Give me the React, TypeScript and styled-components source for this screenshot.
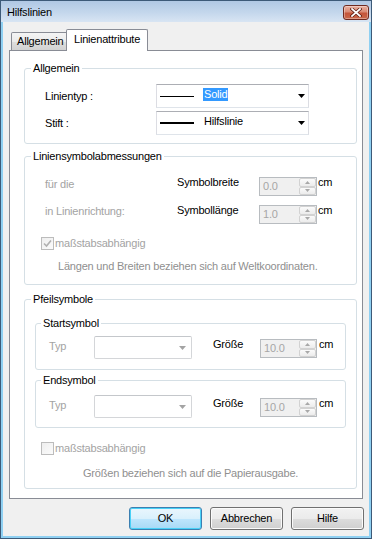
import React from "react";
import styled, { createGlobalStyle, css } from "styled-components";

const Global = createGlobalStyle`
  html, body { margin: 0; padding: 0; background: #ffffff; }
  body {
    font-family: "Liberation Sans", Arial, sans-serif;
    font-size: 11px;
    letter-spacing: -0.2px;
    color: #000;
  }
  * { box-sizing: border-box; }
`;

const Window = styled.div`
  width: 372px;
  height: 539px;
  display: flex;
  flex-direction: column;
  border: 1px solid #3d5a78;
  background: #8fd0f2;
`;

const TitleBar = styled.div`
  height: 21px;
  flex: none;
  display: flex;
  align-items: center;
  justify-content: space-between;
  padding: 0 2px 0 6px;
  background: linear-gradient(#b0c8e4, #c4d7ec 55%, #d8e5f3);
  line-height: 13px;
`;

const TitleText = styled.span`
  padding-top: 1px;
`;

const CloseButton = styled.div`
  width: 26px;
  height: 15px;
  margin-top: 2px;
  border: 1px solid #6f2a20;
  border-radius: 3px;
  background: linear-gradient(#eab1a2 0%, #d98a74 45%, #c5553a 55%, #c9684b 100%);
  box-shadow: inset 0 0 0 1px rgba(255, 255, 255, 0.35);
  display: flex;
  align-items: center;
  justify-content: center;
`;

const Body = styled.div`
  flex: 1;
  margin: 0 2px 2px;
  background: #f0f0f0;
  display: flex;
  flex-direction: column;
  padding: 7px 5px 0 6px;
`;

const TabStrip = styled.div`
  display: flex;
  align-items: flex-start;
  height: 22px;
  padding-left: 2px;
  margin-bottom: -1px;
  position: relative;
  z-index: 1;
`;

const Tab = styled.div<{ $active?: boolean; $w: number }>`
  width: ${(p) => p.$w}px;
  border: 1px solid #898c95;
  border-bottom: none;
  border-radius: 2px 2px 0 0;
  line-height: 13px;
  white-space: nowrap;
  overflow: hidden;
  ${(p) =>
    p.$active
      ? css`
          height: 22px;
          margin-left: -2px;
          padding: 3px 0 0 7px;
          background: #ffffff;
        `
      : css`
          height: 18px;
          margin-top: 3px;
          padding: 2px 0 0 5px;
          background: linear-gradient(#f4f4f4 0%, #ebebeb 50%, #dedede 51%, #d2d2d2 100%);
        `}
`;

const Panel = styled.div`
  width: 354px;
  height: 449px;
  border: 1px solid #898c95;
  background: #ffffff;
  display: flex;
  flex-direction: column;
  padding: 17px 5px 0 14px;
`;

const Group = styled.div<{ $h: number; $mt?: number; $mx?: number; $pt?: number }>`
  position: relative;
  flex: none;
  height: ${(p) => p.$h}px;
  margin: ${(p) => p.$mt ?? 0}px ${(p) => p.$mx ?? 0}px 0;
  padding-top: ${(p) => p.$pt ?? 0}px;
  border: 1px solid #d5dfe5;
  border-radius: 3px;
  display: flex;
  flex-direction: column;
`;

const GroupTitle = styled.span<{ $left?: number }>`
  position: absolute;
  top: -7px;
  left: ${(p) => p.$left ?? 6}px;
  padding: 0 2px;
  background: #ffffff;
  line-height: 13px;
  white-space: nowrap;
`;

const LineGrid = styled.div`
  display: grid;
  grid-template-columns: 111px 153px;
  row-gap: 3px;
  align-items: center;
  padding: 15px 0 0 20px;
`;

const Label = styled.span<{ $dim?: boolean; $dy?: number }>`
  line-height: 13px;
  white-space: nowrap;
  color: ${(p) => (p.$dim ? "#a3a3a3" : "#000000")};
  margin-top: ${(p) => p.$dy ?? 0}px;
`;

const Combo = styled.div<{ $w: number; $h: number; $disabled?: boolean }>`
  width: ${(p) => p.$w}px;
  height: ${(p) => p.$h}px;
  display: flex;
  align-items: center;
  background: #ffffff;
  border: 1px solid ${(p) => (p.$disabled ? "#c4c7cb" : "#acaeb4")};
  border-left-color: ${(p) => (p.$disabled ? "#d4d6d9" : "#dcdde3")};
  border-right-color: ${(p) => (p.$disabled ? "#d4d6d9" : "#dcdde3")};
  border-bottom-color: ${(p) => (p.$disabled ? "#d4d6d9" : "#dfe4ea")};
  border-radius: ${(p) => (p.$disabled ? 2 : 0)}px;
  padding-right: ${(p) => (p.$disabled ? 5 : 3)}px;
`;

const LineSample = styled.span<{ $weight: number }>`
  width: 34px;
  height: ${(p) => p.$weight}px;
  margin-left: 3px;
  background: #000;
  flex: none;
`;

const ComboText = styled.span<{ $selected?: boolean }>`
  margin-left: 9px;
  margin-bottom: 3px;
  padding: 0 1px;
  line-height: 13px;
  ${(p) =>
    p.$selected &&
    css`
      background: #3399ff;
      color: #ffffff;
    `}
`;

const Arrow = styled.svg`
  margin-left: auto;
  flex: none;
`;

const DimGrid = styled.div`
  display: grid;
  grid-template-columns: 132px 82px 58px auto;
  grid-auto-rows: 19px;
  row-gap: 9px;
  align-items: start;
  padding: 20px 0 0 20px;
`;

const SubGrid = styled.div`
  display: grid;
  grid-template-columns: 45px 98px 21px 47px 57px auto;
  align-items: start;
  padding-left: 13px;
`;

const Spacer = styled.span``;

const SpinBox = styled.div<{ $w: number; $dy?: number }>`
  width: ${(p) => p.$w}px;
  height: 19px;
  margin-top: ${(p) => p.$dy ?? 0}px;
  display: flex;
  border: 1px solid #b8bcc0;
  background: #f0f0f0;
`;

const SpinValue = styled.span`
  flex: 1;
  padding-left: 3px;
  line-height: 17px;
  color: #a6a6a6;
`;

const SpinButtons = styled.div`
  width: 17px;
  display: flex;
  flex-direction: column;
  background: #f0f0f0;
`;

const SpinStep = styled.div`
  flex: 1;
  border: 1px solid #d2d2d2;
  border-radius: 2px;
  background: linear-gradient(#fbfbfb, #ececec);
  display: flex;
  align-items: center;
  justify-content: center;
`;

const Unit = styled.span<{ $gap: number; $dy?: number }>`
  margin-left: ${(p) => p.$gap}px;
  margin-top: ${(p) => p.$dy ?? -1}px;
  line-height: 13px;
`;

const CheckRow = styled.div<{ $mt: number }>`
  display: flex;
  align-items: flex-start;
  gap: 1px;
  margin: ${(p) => p.$mt}px 0 0 16px;
  color: #a3a3a3;
  line-height: 13px;
`;

const CheckBox = styled.span`
  width: 13px;
  height: 13px;
  flex: none;
  border: 1px solid #bcbcbc;
  background: linear-gradient(135deg, #eeeeee, #fbfbfb);
  display: flex;
  align-items: center;
  justify-content: center;
`;

const Note = styled.div<{ $mt: number; $pl: number }>`
  margin-top: ${(p) => p.$mt}px;
  padding-left: ${(p) => p.$pl}px;
  color: #8f8f8f;
  line-height: 13px;
  white-space: nowrap;
`;

const ButtonRow = styled.div`
  display: flex;
  justify-content: flex-end;
  gap: 8px;
  margin-top: 8px;
`;

const Button = styled.div<{ $default?: boolean }>`
  width: 73px;
  height: 23px;
  border: 1px solid #707070;
  border-radius: 3px;
  display: flex;
  align-items: center;
  justify-content: center;
  line-height: 13px;
  background: linear-gradient(#f2f2f2 0%, #ebebeb 50%, #dddddd 51%, #cfcfcf 100%);
  box-shadow: inset 0 0 0 1px #fbfbfb;
  ${(p) =>
    p.$default &&
    css`
      border-color: #3c7fb1;
      background: linear-gradient(#eaf6fd 0%, #d9f0fc 50%, #bee6fd 51%, #a7d9f5 100%);
      box-shadow: inset 0 0 0 1px #48d1f7;
    `}
`;

const DownArrow = ({ color }: { color: string }) => (
  <Arrow width="7" height="4" viewBox="0 0 7 4">
    <polygon points="0,0 7,0 3.5,4" fill={color} />
  </Arrow>
);

const TinyArrow = ({ up }: { up?: boolean }) => (
  <svg width="5" height="3" viewBox="0 0 5 3">
    <polygon points={up ? "0,3 5,3 2.5,0" : "0,0 5,0 2.5,3"} fill="#a8a8a8" />
  </svg>
);

const Spin = ({ value, w, dy }: { value: string; w: number; dy?: number }) => (
  <SpinBox $w={w} $dy={dy}>
    <SpinValue>{value}</SpinValue>
    <SpinButtons>
      <SpinStep>
        <TinyArrow up />
      </SpinStep>
      <SpinStep>
        <TinyArrow />
      </SpinStep>
    </SpinButtons>
  </SpinBox>
);

const Check = ({ checked }: { checked?: boolean }) => (
  <CheckBox>
    {checked && (
      <svg width="9" height="9" viewBox="0 0 9 9">
        <path d="M1 4.5 L3.5 7 L8 1.5" stroke="#b0b0b0" strokeWidth="1.6" fill="none" />
      </svg>
    )}
  </CheckBox>
);

const SymbolGroup = ({ title, h, mt, pt }: { title: string; h: number; mt: number; pt: number }) => (
  <Group $h={h} $mt={mt} $mx={10} $pt={pt}>
    <GroupTitle $left={5}>{title}</GroupTitle>
    <SubGrid>
      <Label $dim $dy={4}>
        Typ
      </Label>
      <Combo $w={98} $h={23} $disabled>
        <DownArrow color="#a3a3a3" />
      </Combo>
      <Spacer />
      <Label $dy={2}>Größe</Label>
      <Spin value="10.0" w={57} dy={3} />
      <Unit $gap={2} $dy={2}>
        cm
      </Unit>
    </SubGrid>
  </Group>
);

export default function App() {
  return (
    <>
      <Global />
      <Window>
        <TitleBar>
          <TitleText>Hilfslinien</TitleText>
          <CloseButton>
            <svg width="12" height="9" viewBox="0 0 12 9">
              <path d="M2 1 L10 8 M10 1 L2 8" stroke="#5a1a10" strokeWidth="3.2" strokeLinecap="square" />
              <path d="M2 1 L10 8 M10 1 L2 8" stroke="#ffffff" strokeWidth="1.8" strokeLinecap="square" />
            </svg>
          </CloseButton>
        </TitleBar>
        <Body>
          <TabStrip>
            <Tab $w={57}>Allgemein</Tab>
            <Tab $w={82} $active>
              Linienattribute
            </Tab>
          </TabStrip>
          <Panel>
            <Group $h={76}>
              <GroupTitle>Allgemein</GroupTitle>
              <LineGrid>
                <Label>Linientyp :</Label>
                <Combo $w={153} $h={24}>
                  <LineSample $weight={1} />
                  <ComboText $selected>Solid</ComboText>
                  <DownArrow color="#000" />
                </Combo>
                <Label>Stift :</Label>
                <Combo $w={153} $h={24}>
                  <LineSample $weight={2} />
                  <ComboText>Hilfslinie</ComboText>
                  <DownArrow color="#000" />
                </Combo>
              </LineGrid>
            </Group>

            <Group $h={129} $mt={12}>
              <GroupTitle>Liniensymbolabmessungen</GroupTitle>
              <DimGrid>
                <Label $dim $dy={1}>
                  für die
                </Label>
                <Label $dy={-1}>Symbolbreite</Label>
                <Spin value="0.0" w={58} />
                <Unit $gap={1}>cm</Unit>
                <Label $dim>in Linienrichtung:</Label>
                <Label $dy={-1}>Symbollänge</Label>
                <Spin value="1.0" w={58} />
                <Unit $gap={1}>cm</Unit>
              </DimGrid>
              <CheckRow $mt={13}>
                <Check checked />
                <span>maßstabsabhängig</span>
              </CheckRow>
              <Note $mt={10} $pl={33}>
                Längen und Breiten beziehen sich auf Weltkoordinaten.
              </Note>
            </Group>

            <Group $h={190} $mt={14}>
              <GroupTitle>Pfeilsymbole</GroupTitle>
              <SymbolGroup title="Startsymbol" h={47} mt={23} pt={12} />
              <SymbolGroup title="Endsymbol" h={48} mt={10} pt={14} />
              <CheckRow $mt={14}>
                <Check />
                <span>maßstabsabhängig</span>
              </CheckRow>
              <Note $mt={12} $pl={58}>
                Größen beziehen sich auf die Papierausgabe.
              </Note>
            </Group>
          </Panel>
          <ButtonRow>
            <Button $default>OK</Button>
            <Button>Abbrechen</Button>
            <Button>Hilfe</Button>
          </ButtonRow>
        </Body>
      </Window>
    </>
  );
}
